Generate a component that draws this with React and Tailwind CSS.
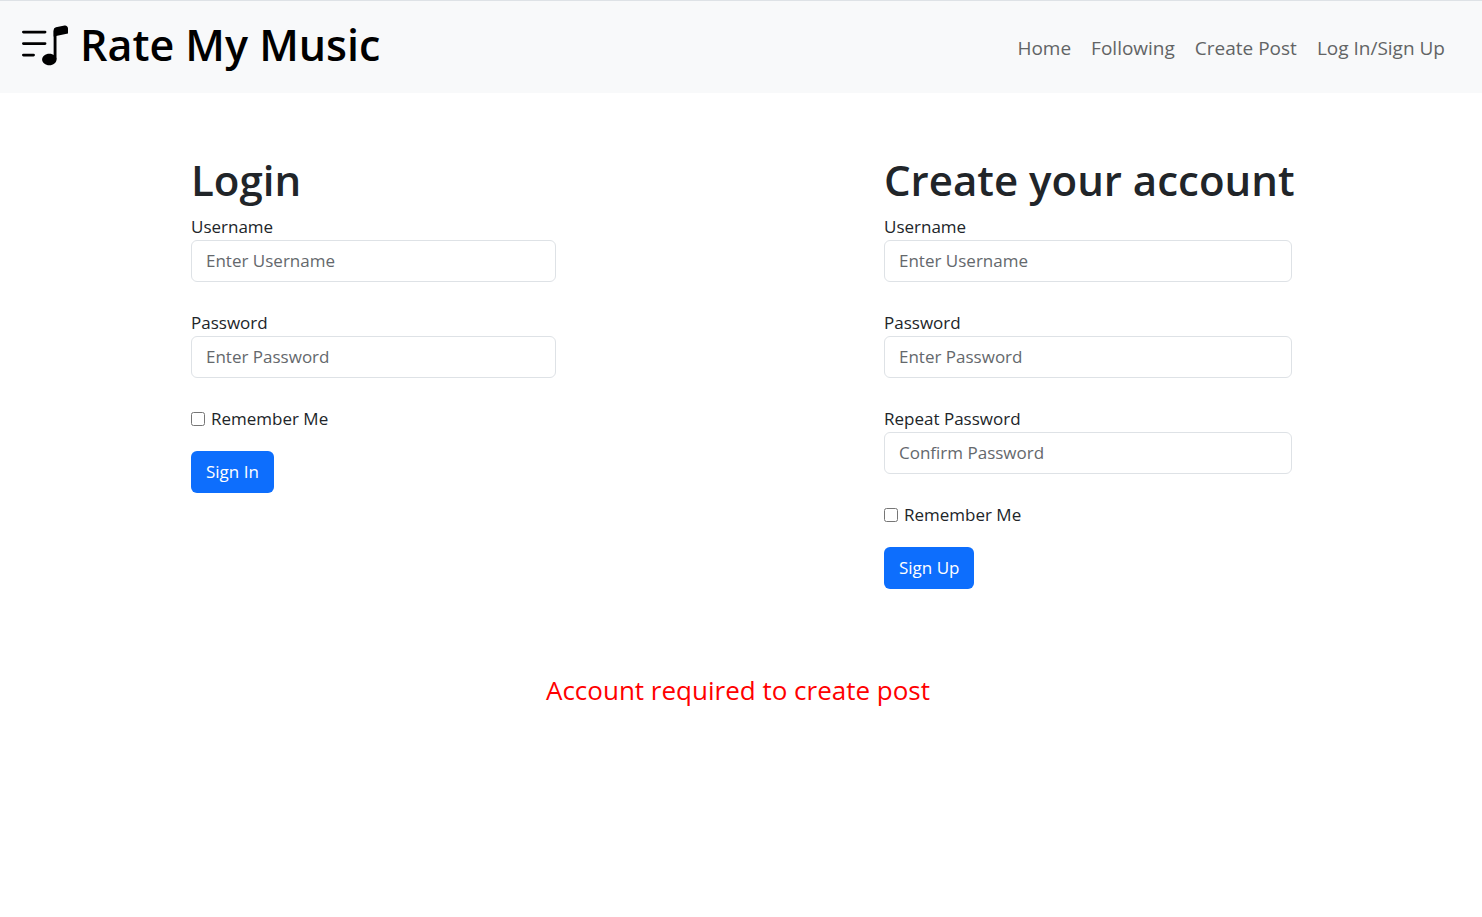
import { BsMusicNoteList } from "react-icons/bs";

const links = ["Home", "Following", "Create Post", "Log In/Sign Up"];

function Field({ id, label, type, placeholder }) {
  return (
    <div className="mb-[27px]">
      <label htmlFor={id} className="block h-[27px] leading-[27px]">
        {label}
      </label>
      <input
        id={id}
        type={type}
        placeholder={placeholder}
        className="block h-[42px] w-full rounded-md border border-[#dee2e6] bg-white px-[14px] pb-[2px] placeholder:text-[#64686c]"
      />
    </div>
  );
}

function AccountForm({ id, title, fields, action, className }) {
  return (
    <form className={className} onSubmit={(e) => e.preventDefault()}>
      <h1 className="mb-[6px] whitespace-nowrap text-[42px] leading-[54px] font-semibold">{title}</h1>
      {fields.map((f) => (
        <Field key={f.name} id={`${id}-${f.name}`} label={f.label} type={f.type} placeholder={f.placeholder} />
      ))}
      <div className="mb-[19px] flex h-[27px] items-center gap-[6px]">
        <input id={`${id}-remember`} type="checkbox" className="size-[14px]" />
        <label htmlFor={`${id}-remember`}>Remember Me</label>
      </div>
      <button type="submit" className="h-[42px] rounded-md bg-[#0d6efd] px-[15px] text-white">
        {action}
      </button>
    </form>
  );
}

const username = { name: "username", label: "Username", type: "text", placeholder: "Enter Username" };
const password = { name: "password", label: "Password", type: "password", placeholder: "Enter Password" };
const repeat = { name: "repeat", label: "Repeat Password", type: "password", placeholder: "Confirm Password" };

export default function App() {
  return (
    <div className="min-h-screen bg-white font-['Open_Sans','Noto_Sans',sans-serif] text-[17px] text-[#212529]">
      <header className="flex items-center justify-between border-t border-[#dee2e6] bg-[#f8f9fa] pr-[37px] pl-[22px]">
        <a href="#" className="flex h-[92px] items-center gap-[12px] pb-[5px] text-black">
          <BsMusicNoteList className="size-[46px]" aria-hidden="true" />
          <span className="text-[43px] leading-[54px] font-semibold whitespace-nowrap">Rate My Music</span>
        </a>
        <nav className="flex gap-[20px] pt-[2px] text-[19px] text-[#626465]">
          {links.map((l) => (
            <a key={l} href="#">
              {l}
            </a>
          ))}
        </nav>
      </header>
      <main className="pt-[60px]">
        <div className="flex items-start justify-between pr-[190px] pl-[191px]">
          <AccountForm id="login" title="Login" fields={[username, password]} action="Sign In" className="w-[365px]" />
          <AccountForm id="signup" title="Create your account" fields={[username, password, repeat]} action="Sign Up" className="w-[408px]" />
        </div>
        <p className="mt-[81px] pr-[6px] text-center text-[26px] leading-[40px] text-[#ff0000]">Account required to create post</p>
      </main>
    </div>
  );
}
